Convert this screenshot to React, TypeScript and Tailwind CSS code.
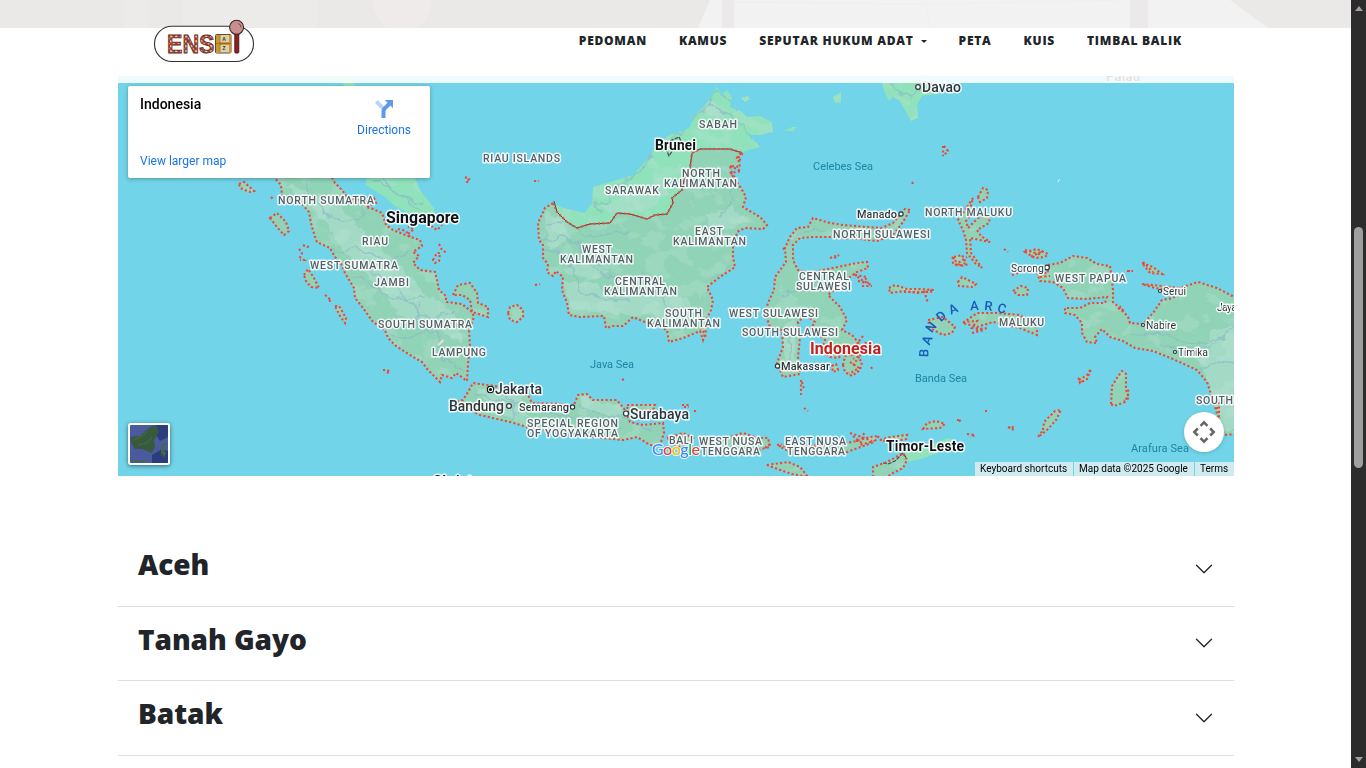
import React from "react";

const SEA = "#72d4e8";

const indonesia: string[] = [
  // Sumatra
  "M273 176L281 185L282 195L303 205L309 212L311 223L315 237L317 242L330 248L335 257L342 265L345 273L354 288L355 298L363 308L373 322L385 330L388 338L396 346L410 355L422 362L428 370L440 382L442 375L452 378L456 373L467 381L468 363L470 347L469 331L474 317L472 312L462 304L446 302L446 296L439 290L437 280L435 272L420 270L413 263L419 256L413 252L422 246L420 240L408 236L393 230L386 225L382 213L373 209L366 207L376 203L374 198L366 201L348 198L342 190L335 183L331 176Z",
  // Kalimantan
  "M553 203L545 208L538 223L539 240L543 245L543 258L548 264L547 272L553 276L556 271L563 277L562 290L567 303L569 315L580 317L604 316L606 328L613 326L623 326L633 317L645 322L655 325L667 330L669 342L683 338L700 331L703 340L707 327L707 318L711 310L713 300L707 287L720 277L735 267L733 257L733 247L737 232L745 228L763 229L767 225L760 217L743 207L746 197L741 188L733 177L730 166L740 167L738 158L743 153L730 149L700 149L692 153L690 168L684 180L682 190L672 198L673 203L667 214L655 215L647 219L630 214L617 213L610 223L590 224L577 228L567 222L557 212Z",
  // Sulawesi
  "M910 210L905 209L893 223L882 228L867 227L843 225L830 223L813 218L808 227L797 228L790 237L785 248L786 262L775 277L774 290L768 303L765 313L770 327L782 330L783 347L777 363L783 377L800 374L798 357L800 337L798 322L806 315L815 322L811 328L825 340L822 350L830 357L838 358L846 352L862 347L852 335L842 330L847 320L840 307L828 295L850 277L857 272L868 268L867 262L857 263L838 267L823 270L810 273L798 270L793 260L793 245L800 238L813 237L830 237L860 239L877 241L893 235L903 222Z",
  // Java
  "M457 402L463 400L468 392L473 383L487 385L495 386L505 389L515 393L528 395L532 403L560 404L573 407L578 395L587 394L593 400L617 400L625 410L630 422L643 425L663 423L664 433L660 445L650 445L637 437L623 440L593 437L560 432L527 427L510 422L493 418L480 415L470 410Z",
  "M627 405L655 405L653 410L642 411L628 412Z",
  // Lesser Sundas
  "M667 438L683 433L693 438L684 446L678 447Z",
  "M700 440L707 437L712 444L706 449Z",
  "M716 445L730 437L743 433L757 438L768 438L770 447L757 450L741 452L723 455Z",
  "M779 446L800 447L820 445L853 442L870 437L879 436L874 442L847 452L825 452L807 453L790 452Z",
  "M767 465L788 462L800 467L808 477L792 474L775 468Z",
  "M873 477L873 467L887 462L903 453L907 460L903 468L893 473L886 478Z",
  "M880 440L890 437L907 435L906 439L890 442Z",
  "M923 429L927 423L936 421L945 424L940 428Z",
  // Maluku
  "M967 207L973 198L969 213L973 213L966 221L968 228L978 218L990 215L989 223L977 230L981 236L990 242L970 238L971 253L982 268L975 263L967 253L966 240L963 230L958 220Z",
  "M978 197L983 188L988 190L987 198L980 202Z",
  "M928 320L943 317L955 327L952 333L943 335L930 328Z",
  "M963 323L977 313L997 313L1020 315L1037 328L1037 335L1020 328L993 322L977 327Z",
  "M958 282L962 277L976 284L973 287L959 286Z",
  "M954 257L962 255L966 263L958 266L953 263Z",
  "M889 288L895 285L907 289L920 289L934 290L918 293L904 291L890 293Z",
  "M1025 252L1037 249L1048 254L1045 257L1035 258Z",
  "M1013 291L1021 286L1028 288L1027 295L1018 295Z",
  "M1142 263L1153 267L1162 274L1150 273Z",
  // Aru, Tanimbar, Kei
  "M1111 404L1112 386L1117 378L1122 371L1126 374L1126 387L1129 392L1125 402L1114 406Z",
  "M1043 430L1044 422L1055 411L1061 410L1056 420L1047 430L1038 437Z",
  "M1079 380L1087 375L1091 369L1087 379L1080 383Z",
  // Papua
  "M1048 265L1060 263L1073 256L1087 258L1097 264L1110 266L1112 280L1113 290L1113 302L1122 310L1128 317L1130 323L1143 324L1153 313L1162 300L1173 298L1183 287L1198 282L1217 288L1238 299L1238 434L1223 435L1218 417L1213 400L1207 382L1197 370L1173 359L1153 351L1135 348L1123 341L1110 337L1102 329L1095 337L1097 343L1087 342L1082 333L1082 323L1075 315L1065 313L1065 308L1080 308L1090 303L1105 303L1107 297L1087 299L1068 298L1063 288L1053 282L1040 281L1037 273L1048 273Z",
  "M1142 284L1162 286L1178 288L1175 291L1155 288Z",
  // Bangka, Belitung
  "M453 295L458 285L470 283L477 293L478 303L488 307L488 317L472 312L470 300L462 295Z",
  "M508 313L510 307L517 305L523 310L523 317L517 322L510 320Z",
  // Mentawai, Nias, Simeulue
  "M270 218L277 213L286 222L289 231L284 235L277 227Z",
  "M304 275L308 269L314 278L319 288L311 287L306 281Z",
  "M239 184L244 182L254 191L250 192L240 188Z",
  "M335 306L339 306L346 318L345 323L340 316Z",
  // Buton, Muna
  "M843 365L845 356L855 354L862 362L860 370L852 376L845 372Z",
  "M832 366L836 364L838 370L833 372Z",
];

const foreign: string[] = [
  "M555 204L563 208L585 213L592 203L593 187L610 182L633 175L645 162L658 143L670 135L684 131L690 127L693 117L707 103L713 94L717 86L721 96L727 90L732 98L730 107L742 112L747 117L760 116L772 122L773 132L760 135L748 135L757 143L760 147L743 152L730 149L700 149L692 153L690 168L684 180L682 190L672 198L673 203L667 214L655 215L647 219L630 214L617 213L610 223L590 224L577 228L567 222L557 212Z",
  "M366 176L366 185L385 197L395 206L410 214L435 216L434 208L420 190L414 176Z",
  "M903 453L917 448L930 445L948 438L955 441L945 450L925 458L907 462Z",
  "M882 83L885 93L889 101L893 97L899 100L905 110L911 121L918 118L917 105L922 96L938 94L940 82L882 82Z",
  "M320 76L328 83L338 80L348 88L357 87L350 76Z",
  "M784 131L792 127L796 127L793 131Z",
  "M833 97L841 92L841 103L835 103Z",
  "M741 98L748 96L750 99L745 102Z",
];

const specks: string[] = [
  "M271 197l3 3", "M303 245l4 2 4 -1", "M299 249l3 4 -2 4 4 3 -4 0", "M325 295l3 2 3 4 -4 -1",
  "M465 177l4 2 -3 3 3 0", "M534 181l5 0", "M535 285l5 -1", "M383 370l4 0 3 2 -4 1", "M622 380l3 -1",
  "M408 234l6 -5 -6 -2", "M398 229l8 2 4 6", "M431 226l6 4 5 -5", "M439 244l3 6 5 3", "M433 260l4 -7 3 0 -1 8 -4 2z",
  "M682 405l7 0 M684 407l5 0", "M694 411l4 0", "M801 380l0 15", "M802 382l2 7", "M804 408l4 3", "M912 182l2 4",
  "M830 258l9 -3 -6 4", "M854 274l8 6 9 5", "M858 281l12 2", "M855 275l12 2 -5 7", "M924 291l4 12", "M862 286l10 0", "M904 292l28 0",
  "M944 146l4 5 -5 5", "M943 146l0 10", "M952 257l8 9 10 -2", "M955 265l12 -8", "M1004 249l4 3", "M1012 275l6 -2",
  "M1127 271l6 0", "M1129 270l0 4", "M1118 308l6 4 -4 -6", "M1126 390l3 8 -5 3", "M1078 378l4 4", "M985 411l4 0", "M957 420l4 0 -3 2",
  "M967 434l8 1 -5 2", "M1008 427l6 3 -2 -4 -3 2", "M850 433l12 4 10 4", "M853 436l6 5 -5 0", "M864 433l-4 12 14 -4",
  "M863 336l-7 9 7 6 -9 2", "M866 342l-6 14", "M862 353l-9 12", "M871 367l2 3", "M850 362l9 6 -10 6", "M848 351l6 8",
  "M963 322l14 -1 -5 7 12 1", "M972 333l12 -3", "M976 330l12 -2", "M783 248l3 3", "M1025 250l14 4 4 -3 -13 6",
  "M765 448l6 -5", "M777 445l5 -1", "M1040 277l10 -1", "M1143 262l10 10", "M1215 403l4 10", "M1219 402l0 16",
  "M730 166l11 5 -10 2 4 4", "M741 153l-4 5 5 3", "M701 327l5 10",
];

const rivers: string[] = [
  "M305 182L313 198L325 212L340 222L360 217L366 206", "M330 248L345 252L355 247L372 255L390 262L410 252", "M350 275L370 283L388 296L405 300L425 296",
  "M390 335L410 340L425 330L440 315L455 312", "M418 305L420 326L436 334L445 360L462 370", "M356 260L378 275L395 287L420 313L440 330",
  "M384 178L395 193L425 205", "M370 180L392 188L420 210", "M541 240L560 238L580 244L588 262L603 275L625 281", "M540 248L560 254L574 270L580 290L600 298L630 300",
  "M548 225L568 222L590 238L628 232", "M640 272L657 290L668 312L680 330", "M703 300L714 280L733 262", "M730 170L733 200L720 217", "M602 214L595 203L609 201L614 188L645 160L680 132L705 108L716 92",
  "M609 192L640 172L655 150", "M708 104L733 117L745 125L752 140", "M720 95L737 110", "M780 300L790 290L810 284L824 279", "M787 330L792 350L788 370",
  "M800 255L790 242L805 231L825 230", "M473 392L490 398L530 408L560 415L600 420L622 427", "M500 388L515 405L512 419", "M580 405L600 415L628 418L650 432",
  "M1130 335L1160 333L1190 344L1220 340L1234 327", "M1160 345L1195 350L1220 343", "M1200 370L1218 360L1234 362", "M893 84L901 94L913 99L924 87",
];

const shades: string[] = [
  "M285 185L320 195L350 215L370 240L395 260L420 290L445 305L460 325L464 345L430 325L400 315L375 280L350 260L325 220Z",
  "M560 280L590 283L620 297L650 290L690 300L702 315L680 327L650 315L600 312L575 310Z",
  "M545 210L565 220L570 240L550 250Z", "M705 215L730 208L750 220L730 230L708 225Z",
  "M600 205L640 190L660 177L670 195L645 210L610 215Z", "M712 98L725 108L720 117L700 113Z",
  "M560 270L590 262L610 275L590 280Z", "M1210 330L1236 325L1236 430L1220 430L1215 400L1200 362Z",
  "M785 325L795 320L797 372L782 373Z", "M475 387L520 393L530 418L490 413Z", "M580 397L620 405L625 420L585 410Z",
];

type Label = { t: string; x: number; y: number; w: number; k: "prov" | "city" | "small" | "country" | "sea" | "main" };

const labels: Label[] = [
  { t: "SABAH", x: 699, y: 128, w: 38, k: "prov" },
  { t: "RIAU ISLANDS", x: 483, y: 162, w: 77, k: "prov" },
  { t: "SARAWAK", x: 605, y: 194, w: 54, k: "prov" },
  { t: "NORTH", x: 682, y: 177, w: 38, k: "prov" },
  { t: "KALIMANTAN", x: 664, y: 187, w: 73, k: "prov" },
  { t: "NORTH SUMATRA", x: 278, y: 204, w: 96, k: "prov" },
  { t: "RIAU", x: 362, y: 245, w: 26, k: "prov" },
  { t: "WEST SUMATRA", x: 310, y: 269, w: 88, k: "prov" },
  { t: "JAMBI", x: 374, y: 286, w: 35, k: "prov" },
  { t: "SOUTH SUMATRA", x: 378, y: 328, w: 94, k: "prov" },
  { t: "LAMPUNG", x: 432, y: 356, w: 54, k: "prov" },
  { t: "WEST", x: 582, y: 253, w: 30, k: "prov" },
  { t: "KALIMANTAN", x: 560, y: 263, w: 73, k: "prov" },
  { t: "EAST", x: 695, y: 235, w: 28, k: "prov" },
  { t: "KALIMANTAN", x: 673, y: 245, w: 73, k: "prov" },
  { t: "CENTRAL", x: 615, y: 285, w: 50, k: "prov" },
  { t: "KALIMANTAN", x: 604, y: 295, w: 73, k: "prov" },
  { t: "SOUTH", x: 665, y: 317, w: 37, k: "prov" },
  { t: "KALIMANTAN", x: 647, y: 327, w: 73, k: "prov" },
  { t: "NORTH SULAWESI", x: 833, y: 238, w: 97, k: "prov" },
  { t: "CENTRAL", x: 799, y: 280, w: 50, k: "prov" },
  { t: "SULAWESI", x: 796, y: 290, w: 55, k: "prov" },
  { t: "WEST SULAWESI", x: 729, y: 317, w: 89, k: "prov" },
  { t: "SOUTH SULAWESI", x: 742, y: 336, w: 96, k: "prov" },
  { t: "NORTH MALUKU", x: 925, y: 216, w: 87, k: "prov" },
  { t: "WEST PAPUA", x: 1055, y: 282, w: 71, k: "prov" },
  { t: "MALUKU", x: 999, y: 326, w: 45, k: "prov" },
  { t: "SPECIAL REGION", x: 527, y: 427, w: 91, k: "prov" },
  { t: "OF YOGYAKARTA", x: 527, y: 437, w: 91, k: "prov" },
  { t: "BALI", x: 669, y: 444, w: 24, k: "prov" },
  { t: "WEST NUSA", x: 699, y: 445, w: 63, k: "prov" },
  { t: "TENGGARA", x: 701, y: 455, w: 59, k: "prov" },
  { t: "EAST NUSA", x: 785, y: 445, w: 61, k: "prov" },
  { t: "TENGGARA", x: 787, y: 455, w: 58, k: "prov" },
  { t: "SOUTH", x: 1196, y: 404, w: 37, k: "prov" },
  { t: "Celebes Sea", x: 813, y: 170, w: 60, k: "sea" },
  { t: "Java Sea", x: 590, y: 368, w: 44, k: "sea" },
  { t: "Banda Sea", x: 915, y: 382, w: 52, k: "sea" },
  { t: "Arafura Sea", x: 1131, y: 452, w: 58, k: "sea" },
  { t: "Davao", x: 922, y: 92, w: 39, k: "city" },
  { t: "Jakarta", x: 495, y: 394, w: 47, k: "city" },
  { t: "Bandung", x: 449, y: 411, w: 55, k: "city" },
  { t: "Surabaya", x: 630, y: 419, w: 59, k: "city" },
  { t: "Semarang", x: 519, y: 411, w: 50, k: "small" },
  { t: "Makassar", x: 781, y: 370, w: 49, k: "small" },
  { t: "Manado", x: 857, y: 218, w: 40, k: "small" },
  { t: "Sorong", x: 1011, y: 272, w: 33, k: "small" },
  { t: "Serui", x: 1163, y: 295, w: 23, k: "small" },
  { t: "Nabire", x: 1146, y: 329, w: 30, k: "small" },
  { t: "Timika", x: 1178, y: 356, w: 30, k: "small" },
  { t: "Jaya", x: 1217, y: 311, w: 20, k: "small" },
  { t: "Brunei", x: 655, y: 150, w: 41, k: "country" },
  { t: "Timor-Leste", x: 886, y: 451, w: 78, k: "country" },
  { t: "Singapore", x: 386, y: 223, w: 73, k: "country" },
  { t: "Christmas", x: 433, y: 485.500, w: 67, k: "country" },
  { t: "Indonesia", x: 810, y: 353.500, w: 71, k: "main" },
  { t: "Palau", x: 1106, y: 81, w: 34, k: "country" },
];

const kinds = {
  prov: { size: 10.5, weight: 500, fill: "#565f66" },
  city: { size: 14, weight: 500, fill: "#30353a" },
  small: { size: 11, weight: 500, fill: "#30353a" },
  country: { size: 14, weight: 700, fill: "#111111" },
  sea: { size: 11, weight: 400, fill: "#1b87a3" },
  main: { size: 16, weight: 700, fill: "#c5221f" },
};

const lightTowns = ["Sorong", "Serui", "Nabire", "Timika", "Jaya"];

const dots: [number, number, number][] = [
  [918, 87, 2.3], [509, 406, 2.4], [572.5, 407, 2.1], [626, 413.5, 2.5], [777.5, 366, 2.1], [901, 214, 2.1],
  [1047, 267.5, 2.3], [1160, 291, 1.5], [1143, 325, 1.5], [1175, 352, 1.5],
];

const arc: [string, number, number, number][] = [
  ["B", 924, 353, -88], ["A", 927, 340, -68], ["N", 931, 327, -52], ["D", 941, 316, -40], ["A", 953, 309, -24],
  ["A", 974.5, 305.5, -2], ["R", 988.5, 306, 6], ["C", 1002, 308.5, 14],
];

function MapCanvas() {
  return (
    <svg className="block h-[400px] w-[1116px]" viewBox="118 76 1116 400" fontFamily='Roboto, "Liberation Sans", sans-serif'>
      <defs>
        <clipPath id="land">
          {indonesia.map((d, i) => <path key={i} d={d} />)}
          {foreign.map((d, i) => <path key={"f" + i} d={d} />)}
        </clipPath>
        <filter id="terrain" x="0" y="0" width="100%" height="100%" colorInterpolationFilters="sRGB">
          <feTurbulence type="fractalNoise" baseFrequency="0.045 0.06" numOctaves="4" seed="7" />
          <feColorMatrix values="0 0 0 0 0.72  0 0 0 0 0.88  0 0 0 0 0.82  12 0 0 0 -6.4" />
        </filter>
        <filter id="wiggle" filterUnits="userSpaceOnUse" x="118" y="76" width="1116" height="400">
          <feTurbulence type="fractalNoise" baseFrequency="0.09" numOctaves="2" seed="3" />
          <feDisplacementMap in="SourceGraphic" scale="11" xChannelSelector="R" yChannelSelector="G" />
        </filter>
      </defs>
      <rect x="118" y="76" width="1116" height="400" fill={SEA} />
      {foreign.map((d, i) => <path key={i} d={d} fill="#90e2bb" />)}
      {indonesia.map((d, i) => <path key={i} d={d} fill="#90d3b7" />)}
      <g clipPath="url(#land)">
        <g filter="url(#wiggle)">
          {shades.map((d, i) => <path key={i} d={d} fill="#a9dccb" opacity="0.75" />)}
        </g>
        <rect x="118" y="76" width="1116" height="400" filter="url(#terrain)" opacity="0.32" />
        <g filter="url(#wiggle)">
          {rivers.map((d, i) => <path key={i} d={d} fill="none" stroke="#8bbcc6" strokeWidth="1.500" strokeLinejoin="round" opacity="0.75" />)}
        </g>
      </g>
      <path d="M437 345l6 -6 1 2 -5 5z" fill="#e8ddd6" />
      <path d="M1058 182l1.500 -3" stroke="#e3f5f5" strokeWidth="1" />
      <path d="M554 201L557 212L567 222L577 228L590 224L610 223L617 213L630 214L647 219L655 215L667 214L673 203L672 198L682 190L684 180L690 168L692 153L700 149L730 149L742 153" fill="none" stroke="#40474a" strokeWidth="1" />
      <path d="M660 150L666 149L669 156L674 148L680 145M670 141L679 137L682 143L676 147M883 463L888 464L895 461L903 453L907 459" fill="none" stroke="#40474a" strokeWidth="1.200" strokeDasharray="4 1" />
      <g fill="none" stroke="#ee4735" strokeWidth="2.100" strokeDasharray="2.100 2.300">
        {indonesia.map((d, i) => <path key={i} d={d} />)}
        {specks.map((d, i) => <path key={i} d={d} />)}
      </g>
      {dots.map(([x, y, r], i) => <circle key={i} cx={x} cy={y} r={r} fill="#fff" stroke="#30353a" strokeWidth="1.200" />)}
      <circle cx="490.500" cy="389.500" r="3.200" fill="#fff" stroke="#111" strokeWidth="1.100" />
      <circle cx="490.500" cy="389.500" r="1.600" fill="#111" />
      {labels.map((l, i) => {
        const k = kinds[l.k];
        const size = l.t === "Singapore" ? 16 : l.t === "Palau" ? 13 : lightTowns.includes(l.t) ? 10.5 : k.size;
        return (
          <text key={i} x={l.x} y={l.y} textLength={l.w} fontSize={size} fontWeight={lightTowns.includes(l.t) ? 400 : k.weight} fill={k.fill}
            stroke={l.k === "sea" ? "none" : "#ffffff"} strokeOpacity="0.85" strokeWidth={l.t === "Palau" ? 1 : 3} strokeLinejoin="round" paintOrder="stroke">{l.t}</text>
        );
      })}
      <g fontSize="13" fontWeight="500" fill="#185abc" textAnchor="middle">
        {arc.map(([c, x, y, a], i) => <text key={i} x={x} y={y + 4.500} transform={`rotate(${a} ${x} ${y})`}>{c}</text>)}
      </g>
      <text x="652" y="455" fontSize="16" fontFamily='Lato, "Liberation Sans", sans-serif' fontWeight="500" textLength="48" stroke="#fff" strokeWidth="2" strokeOpacity="0.8" paintOrder="stroke">
        <tspan fill="#4285f4">G</tspan><tspan fill="#ea4335">o</tspan><tspan fill="#fbbc04">o</tspan><tspan fill="#4285f4">g</tspan><tspan fill="#34a853">l</tspan><tspan fill="#ea4335">e</tspan>
      </text>
    </svg>
  );
}

function Logo() {
  return (
    <svg className="block h-[44px] w-[102px]" viewBox="153 19 102 44">
      <defs>
        <pattern id="batik" width="5" height="5" patternUnits="userSpaceOnUse">
          <rect width="5" height="5" fill="#a8433d" />
          <circle cx="1.200" cy="1.300" r="1.200" fill="#e5c49c" />
          <circle cx="3.700" cy="3.600" r="1.100" fill="#d9ab86" />
        </pattern>
      </defs>
      <rect x="154.500" y="26.300" width="99" height="35.200" rx="17.500" fill="#fff" stroke="#33302f" strokeWidth="1.100" />
      <text x="167" y="52.800" fontFamily='"Liberation Sans", sans-serif' fontWeight="700" fontSize="26" textLength="47.500" lengthAdjust="spacingAndGlyphs" fill="url(#batik)" stroke="#5d2a25" strokeWidth="0.900">ENS</text>
      <rect x="215.500" y="34.500" width="15.500" height="18.500" rx="1" fill="#dccfae" stroke="#6a4a1c" strokeWidth="1" />
      <path d="M216 35h3.800v18H216zM229 35H231v18h-2zM216 42h15v3h-15z" fill="#c9962f" />
      <path d="M216 43.500h15M220 35v17.500" stroke="#7d5719" strokeWidth="0.600" />
      <text x="222.300" y="40.800" fontFamily='"Liberation Sans", sans-serif' fontSize="5" fontWeight="700" fill="#333">A</text>
      <text x="222.500" y="50" fontFamily='"Liberation Sans", sans-serif' fontSize="5" fontWeight="700" fill="#333">Z</text>
      <rect x="234.800" y="33.500" width="4" height="19.500" rx="0.800" fill="#8f1f22" stroke="#4a1315" strokeWidth="0.900" />
      <circle cx="236.600" cy="27.300" r="7" fill="#c88f8e" stroke="#3e2625" strokeWidth="1.100" />
      <path d="M238 23.500q3 0.500 3.200 4" fill="none" stroke="#704746" strokeWidth="0.900" />
    </svg>
  );
}

function Banner() {
  return (
    <svg className="block h-7 w-full" viewBox="0 0 1351 28" preserveAspectRatio="none">
      <rect width="1351" height="28" fill="#ebe9e8" />
      <path d="M124 0h24v28h-24zM183 0h134v28H183z" fill="#ecebea" />
      <path d="M373 0h59q-2 20-14 28h-32q-12-10-13-28z" fill="#efebea" />
      <path d="M710 0h520l38 28H698z" fill="#f2f2f3" />
      <path d="M722 0h12v28h-12zM1130 0h18v28h-18z" fill="#ebe9e9" />
      <path d="M734 2l190 2 200-4M925 0l5 28" fill="none" stroke="#eeeff3" strokeWidth="1" />
    </svg>
  );
}

const link = "whitespace-nowrap";

function NavBar() {
  return (
    <header className="absolute inset-x-0 top-0 h-[83px]">
      <Banner />
      <div className="h-12 bg-white" />
      <div className="h-[7px] bg-white/88" />
      <div className="absolute inset-x-0 top-0 flex items-start pl-[153px] pr-[169px]">
        <div className="pt-[19px]"><Logo /></div>
        <nav className="ml-auto flex gap-8 pt-[32px] font-['Open_Sans',sans-serif] text-[12px] font-extrabold leading-[18px] tracking-[0.75px] text-[#212529]">
          <a className={link}>PEDOMAN</a>
          <a className={link}>KAMUS</a>
          <a className="flex items-center whitespace-nowrap">SEPUTAR HUKUM ADAT<span className="ml-[7px] border-x-[3px] border-t-[3px] border-x-transparent border-t-[#212529]" /></a>
          <a className={link}>PETA</a>
          <a className={link}>KUIS</a>
          <a className={link}>TIMBAL BALIK</a>
        </nav>
      </div>
    </header>
  );
}

function MapPanel() {
  return (
    <section className="relative h-[400px] w-[1116px] overflow-hidden font-[Roboto,sans-serif]">
      <MapCanvas />
      <div className="absolute left-[10px] top-[10px] flex h-[92px] w-[302px] justify-between rounded-[2px] bg-white px-3 shadow-[0_1px_4px_rgba(0,0,0,0.3)]">
        <div className="flex flex-col justify-between pb-[9px] pt-[9px]">
          <span className="text-[14px] font-medium leading-[18px] text-black">Indonesia</span>
          <a className="text-[12px] leading-4 text-[#1a73e8]">View larger map</a>
        </div>
        <a className="flex flex-col items-center pr-[7px] pt-[11px] text-[12px] leading-4 text-[#1a73e8]">
          <svg className="mb-[3px] h-[22px] w-[22px]" viewBox="0 0 22 22">
            <path d="M4.500 3L11 9.500l-2.500 3L2 6z" fill="#b9d2f6" />
            <path d="M8.500 21V14q0-2.200 1.600-3.800L14.500 5.800 11.800 3H20v8.300l-2.600-2.700-4 4q-.9.900-.9 2.200V21z" fill="#5f9aea" />
          </svg>
          Directions
        </a>
      </div>
      <div className="absolute left-[10px] top-[347px] h-[42px] w-[42px] overflow-hidden rounded-[3px] border-2 border-white shadow-[0_1px_4px_rgba(0,0,0,0.5)]">
        <svg className="block h-[38px] w-[38px]" viewBox="0 0 38 38">
          <rect width="38" height="38" fill="#4a5a9c" />
          <path d="M26 0h12v12l-8 4-5-8zM22 30l10-6 6 2v12H22z" fill="#2b3d7c" />
          <path d="M0 12L10 11 20 2 26 0 29 7 24 15 25 22 22 28 12 24 5 24 1 17Z" fill="#385a3c" />
          <path d="M3 15l8-3 7-6M8 20l9-2 5-6" stroke="#42663d" strokeWidth="1.500" fill="none" />
          <path d="M31 22l4-5 2 2-4 4 3 5-2 5-2-5-1 6zM0 35.500l14 0 6 1.500H0z" fill="#46664a" />
        </svg>
      </div>
      <div className="absolute left-[1066px] top-[336px] flex h-10 w-10 items-center justify-center rounded-full bg-white shadow-[0_1px_4px_-1px_rgba(0,0,0,0.3)]">
        <svg className="h-[26px] w-[26px]" viewBox="0 0 26 26" fill="none" stroke="#666" strokeWidth="2.500">
          <path d="M9.500 6.800L13 3.300l3.500 3.500M9.500 19.200L13 22.700l3.500-3.500M6.800 9.500L3.300 13l3.500 3.500M19.200 9.500L22.700 13l-3.500 3.500" />
        </svg>
      </div>
      <div className="absolute bottom-0 right-0 flex h-[14px] gap-px text-[10px] leading-[14px] text-black">
        <span className="w-[98px] whitespace-nowrap bg-[#d0ebf0] pl-[5px] tracking-[0.030px]">Keyboard shortcuts</span>
        <span className="w-[120px] whitespace-nowrap bg-[#d0ebf0] pl-[5px]">Map data ©2025 Google</span>
        <span className="w-[39px] whitespace-nowrap bg-[#d0ebf0] pl-[5px]">Terms</span>
      </div>
    </section>
  );
}

function Row({ title }: { title: string }) {
  return (
    <div className="flex h-[74.600px] items-center justify-between border-b border-[#dcdddf] px-5">
      <h3 className="pb-[9px] font-['Open_Sans',sans-serif] text-[28px] font-extrabold leading-[34px] tracking-[-0.050px] text-[#212529]">{title}</h3>
      <svg className="h-5 w-5" viewBox="0 0 16 16" fill="#212529">
        <path fillRule="evenodd" d="M1.646 4.646a.5.5 0 0 1 .708 0L8 10.293l5.646-5.647a.5.5 0 0 1 .708.708l-6 6a.5.5 0 0 1-.708 0l-6-6a.5.5 0 0 1 0-.708z" />
      </svg>
    </div>
  );
}

export default function App() {
  return (
    <div className="flex h-[768px] w-[1366px] overflow-hidden bg-white">
      <div className="relative h-full w-[1351px] overflow-hidden">
        <main className="flex flex-col px-[118px] pt-[76px]">
          <MapPanel />
          <div className="mt-[56px] w-[1116px]">
            {["Aceh", "Tanah Gayo", "Batak"].map((t) => <Row key={t} title={t} />)}
          </div>
        </main>
        <NavBar />
      </div>
      <div className="flex h-full w-[15px] flex-col items-center justify-between bg-[#2c2c2c] py-[6px]">
        <span className="border-x-[4.500px] border-b-[5px] border-x-transparent border-b-[#9f9f9f]" />
        <span className="mt-[216px] h-[241px] w-[9px] rounded-full bg-[#9f9f9f]" />
        <span className="mt-auto border-x-[4.500px] border-t-[5px] border-x-transparent border-t-[#9f9f9f]" />
      </div>
    </div>
  );
}
